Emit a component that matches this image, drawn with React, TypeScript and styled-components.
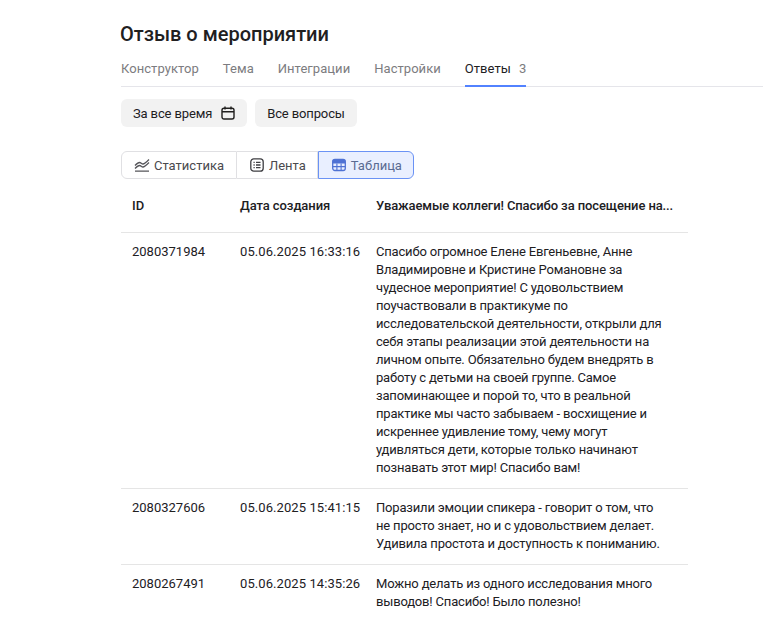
import React from "react";
import styled, { createGlobalStyle } from "styled-components";

const Global = createGlobalStyle`
  html, body { margin: 0; padding: 0; background: #fff; }
  body { font-family: "Roboto", "Noto Sans", sans-serif; color: #212124; overflow: hidden; height: 636px; }
`;

const Page = styled.div`
  padding: 21px 0 0 121px;
  width: 642px;
`;
const Title = styled.h1`
  margin: 0 0 0 -1px;
  font-size: 20px;
  line-height: 26px;
  font-weight: 500;
  color: #21201f;
`;
const Tabs = styled.div`
  display: flex;
  gap: 24px;
  margin-top: 8px;
  height: 31px;
  border-bottom: 1px solid #e5e5ea;
`;
const Tab = styled.div<{ $active?: boolean }>`
  display: flex;
  gap: 8px;
  height: 30px;
  line-height: 27px;
  font-size: 13px;
  letter-spacing: 0.05px;
  color: ${(p) => (p.$active ? "#21201f" : "#7c7c80")};
  border-bottom: ${(p) => (p.$active ? "2px solid #5282ff" : "none")};
`;
const Count = styled.span`
  color: #7c7c80;
`;
const Filters = styled.div`
  display: flex;
  gap: 8px;
  margin-top: 12px;
`;
const FilterButton = styled.div`
  display: flex;
  align-items: center;
  gap: 9px;
  height: 28px;
  padding: 0 12px;
  border-radius: 6px;
  background: #f2f2f2;
  font-size: 13px;
  letter-spacing: -0.13px;
  color: #21201f;
`;
const Segments = styled.div`
  display: flex;
  margin-top: 24px;
  height: 28px;
  width: fit-content;
`;
const Segment = styled.div<{ $active?: boolean; $pos: "first" | "mid" | "last" }>`
  display: flex;
  align-items: center;
  gap: ${(p) => (p.$pos === "first" ? "4px" : "5px")};
  box-sizing: border-box;
  height: 28px;
  padding: 0 ${(p) => (p.$pos === "first" ? "12px" : "11px")} 0
    ${(p) => (p.$pos === "first" ? "12px" : "13px")};
  font-size: 13px;
  color: ${(p) => (p.$active ? "#5a6b92" : "#4a4a4e")};
  background: ${(p) => (p.$active ? "#e9efff" : "#fff")};
  border: 1px solid ${(p) => (p.$active ? "#6a92f5" : "#e0e0e3")};
  border-left-width: ${(p) => (p.$pos === "first" || p.$active ? "1px" : "0")};
  border-radius: ${(p) =>
    p.$pos === "first" ? "6px 0 0 6px" : p.$pos === "last" ? "0 6px 6px 0" : "0"};
`;
const Table = styled.div`
  width: 567px;
`;
const Row = styled.div<{ $header?: boolean; $last?: boolean }>`
  display: grid;
  grid-template-columns: 108px 136px 1fr;
  padding: ${(p) => (p.$header ? "18px 11px 17px" : "10px 11px 11px")};
  border-bottom: ${(p) => (p.$last ? "none" : "1px solid #e5e5e5")};
  font-size: 13px;
  line-height: 18px;
  color: #21201f;
  font-weight: ${(p) => (p.$header ? 500 : 400)};
`;
const Cell = styled.div`
  white-space: nowrap;
`;
const DateCell = styled(Cell)`
  letter-spacing: 0.08px;
`;
const HeaderDate = styled(Cell)`
  letter-spacing: -0.08px;
`;
const TextCell = styled(Cell)<{ $header?: boolean }>`
  letter-spacing: ${(p) => (p.$header ? "-0.11px" : "-0.18px")};
`;
const Line = styled.span`
  display: block;
  white-space: nowrap;
`;

const CalendarIcon = () => (
  <svg width="14" height="14" viewBox="0 0 14 14" fill="none" stroke="#21201f" strokeWidth="1.4">
    <rect x="1" y="2.2" width="12" height="10.8" rx="2" />
    <path d="M4 0.5v3M10 0.5v3M1 5.8h12" />
  </svg>
);
const ChartIcon = () => (
  <svg width="16" height="14" viewBox="0 0 16 14" fill="none" stroke="#55555a" strokeWidth="1.3">
    <path d="M1 7.5c1.5-1.5 3-3 4.5-3s2 1.5 3.500 1.500S13 3.500 15 1.500M1 10.500c1.500-1.500 3-3 4.500-3s2 1.500 3.500 1.500 4-2.500 6-4.500M1 13.200h14" />
  </svg>
);
const ListIcon = () => (
  <svg width="14" height="14" viewBox="0 0 14 14" fill="none" stroke="#3e3e42" strokeWidth="1.3">
    <rect x="0.8" y="0.8" width="12.4" height="12.4" rx="3" />
    <path d="M3.5 4.3h1.2M3.5 7h1.2M3.5 9.7h1.2M6 4.3h4.5M6 7h4.500M6 9.7h4.500" />
  </svg>
);
const TableIcon = () => (
  <svg width="14" height="14" viewBox="0 0 14 14" fill="none">
    <rect x="0.7" y="1.5" width="12.6" height="11" rx="2.2" stroke="#4f72d4" strokeWidth="1.3" />
    <path d="M2.5 1.500h9a2 2 0 0 1 2 2v2h-13v-2a2 2 0 0 1 2-2z" fill="#4f72d4" />
    <path d="M1 8.600h12M4.900 5.500V12.500M9.100 5.500V12.500" stroke="#4f72d4" strokeWidth="1.1" />
  </svg>
);

const rows = [
  {
    id: "2080371984",
    date: "05.06.2025 16:33:16",
    lines: [
      "Спасибо огромное Елене Евгеньевне, Анне",
      "Владимировне и Кристине Романовне за",
      "чудесное мероприятие! С удовольствием",
      "поучаствовали в практикуме по",
      "исследовательской деятельности, открыли для",
      "себя этапы реализации этой деятельности на",
      "личном опыте. Обязательно будем внедрять в",
      "работу с детьми на своей группе. Самое",
      "запоминающее и порой то, что в реальной",
      "практике мы часто забываем - восхищение и",
      "искреннее удивление тому, чему могут",
      "удивляться дети, которые только начинают",
      "познавать этот мир! Спасибо вам!",
    ],
  },
  {
    id: "2080327606",
    date: "05.06.2025 15:41:15",
    lines: [
      "Поразили эмоции спикера - говорит о том, что",
      "не просто знает, но и с удовольствием делает.",
      "Удивила простота и доступность к пониманию.",
    ],
  },
  {
    id: "2080267491",
    date: "05.06.2025 14:35:26",
    lines: ["Можно делать из одного исследования много", "выводов! Спасибо! Было полезно!"],
  },
];

export default function App() {
  return (
    <Page>
      <Global />
      <Title>Отзыв о мероприятии</Title>
      <Tabs>
        <Tab>Конструктор</Tab>
        <Tab>Тема</Tab>
        <Tab>Интеграции</Tab>
        <Tab>Настройки</Tab>
        <Tab $active>
          Ответы <Count>3</Count>
        </Tab>
      </Tabs>
      <Filters>
        <FilterButton>
          За все время <CalendarIcon />
        </FilterButton>
        <FilterButton>Все вопросы</FilterButton>
      </Filters>
      <Segments>
        <Segment $pos="first">
          <ChartIcon /> Статистика
        </Segment>
        <Segment $pos="mid">
          <ListIcon /> Лента
        </Segment>
        <Segment $pos="last" $active>
          <TableIcon /> Таблица
        </Segment>
      </Segments>
      <Table>
        <Row $header>
          <Cell>ID</Cell>
          <HeaderDate>Дата создания</HeaderDate>
          <TextCell $header>Уважаемые коллеги! Спасибо за посещение на...</TextCell>
        </Row>
        {rows.map((r, i) => (
          <Row key={r.id} $last={i === rows.length - 1}>
            <Cell>{r.id}</Cell>
            <DateCell>{r.date}</DateCell>
            <TextCell>
              {r.lines.map((l) => (
                <Line key={l}>{l}</Line>
              ))}
            </TextCell>
          </Row>
        ))}
      </Table>
    </Page>
  );
}
